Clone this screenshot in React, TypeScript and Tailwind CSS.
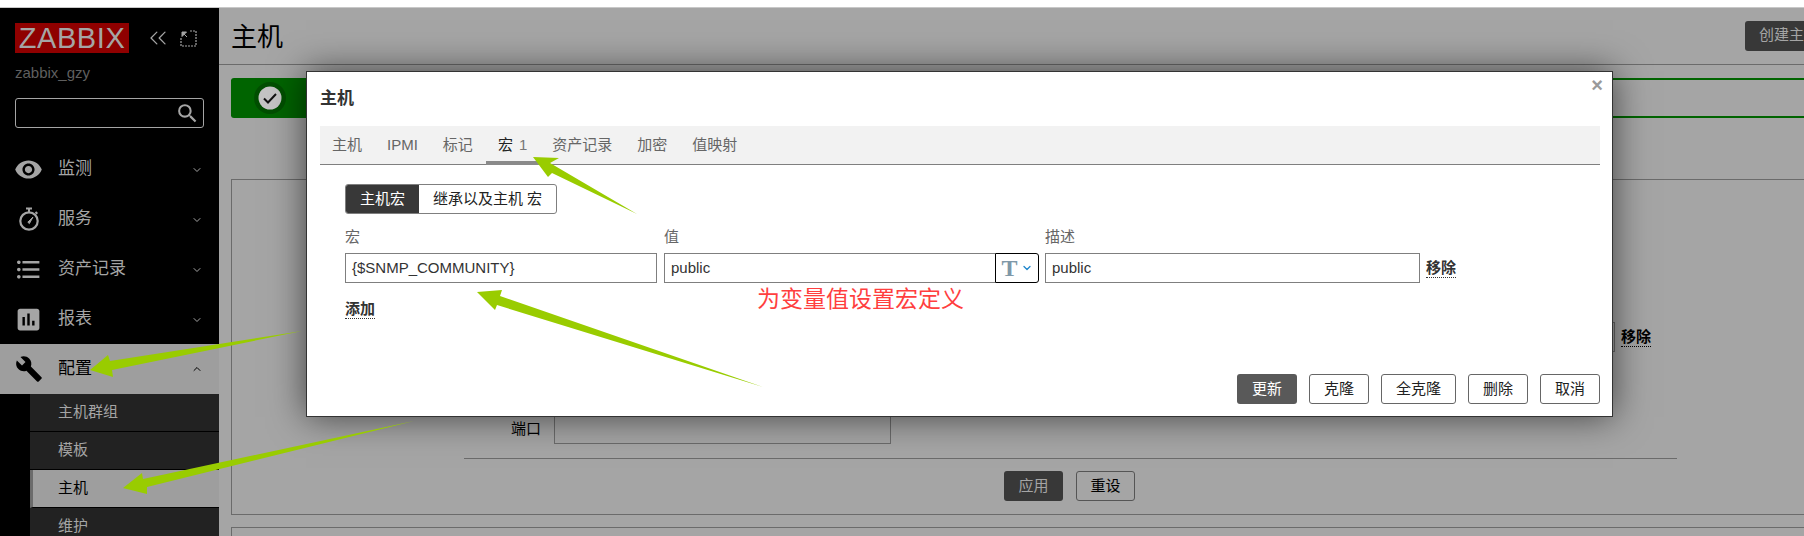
import React from "react";
import { ChevronDown, ChevronUp, ChevronsLeft } from "lucide-react";
import {
  MdAssessment,
  MdBuild,
  MdFormatListBulleted,
  MdSearch,
  MdVisibility,
} from "react-icons/md";

const Stopwatch = () => (
  <svg width="22" height="24" viewBox="0 0 22 24" fill="none" stroke="currentColor">
    <circle cx="11" cy="14" r="8.7" strokeWidth="2.2" />
    <path d="M8 1.5h6M11 1.5v3.5M17.5 5l1.8 1.8" strokeWidth="2" />
    <path d="M9.8 15.2L15 10l-3.6 6.6z" fill="currentColor" strokeWidth="1" />
  </svg>
);

const menuItems = [
  { label: "监测", icon: <MdVisibility size={29} /> },
  { label: "服务", icon: <Stopwatch /> },
  { label: "资产记录", icon: <MdFormatListBulleted size={29} /> },
  { label: "报表", icon: <MdAssessment size={29} /> },
];

const tabs = ["主机", "IPMI", "标记", "宏", "资产记录", "加密", "值映射"];

const arrows = [
  "90,370 108,355 110,361 302,331 112,370 113,377",
  "123,488 142,473 143,479 414,421 147,487 147,494",
  "533,157 559,158 550,163 637,214 552,173 548,177",
  "477,292 502,290 500,296 763,387 497,305 495,310",
];

const SideRow = ({ label, icon }: { label: string; icon: React.ReactNode }) => (
  <div className="flex h-[50px] items-center text-[17px] text-[#a5a5a5]">
    <span className="flex w-[58px] justify-center pr-[1px]">{icon}</span>
    <span>{label}</span>
    <ChevronDown size={12} strokeWidth={2} className="ml-auto mr-[16px] mt-[2px]" />
  </div>
);

const SubRow = ({ label, active }: { label: string; active?: boolean }) => (
  <div
    className={
      active
        ? "flex h-[38px] items-center border-b border-black border-l-[3px] border-l-[#6b6b6b] bg-[#9e9e9e] pl-[25px] text-[15px] text-black"
        : "flex h-[38px] items-center border-b border-black bg-[#222222] pl-[28px] text-[15px] text-[#a5a5a5]"
    }
  >
    {label}
  </div>
);

const Sidebar = () => (
  <aside className="h-full w-[219px] shrink-0 overflow-hidden bg-black">
    <div className="flex items-start pl-[15px] pt-[15px]">
      <div className="flex h-[30px] w-[114px] items-center justify-center bg-[#8f0000] text-[29px] leading-none tracking-[0.6px] text-[#a5a5a5]">
        ZABBIX
      </div>
      <ChevronsLeft size={28} strokeWidth={1.1} className="ml-[15px] mt-[1px] text-[#a5a5a5]" />
      <svg width="17" height="17" viewBox="0 0 17 17" className="ml-[8px] mt-[7px] text-[#a5a5a5]" fill="none" stroke="currentColor">
        <path d="M10 1h6v15H1V8" strokeWidth="1.2" strokeDasharray="2 1" />
        <path d="M2 2l5 5M2 2h4.5L2 6.5z" fill="currentColor" strokeWidth="1" />
      </svg>
    </div>
    <div className="mt-[10px] pl-[15px] text-[15px] leading-[20px] text-[#5f5f5f]">zabbix_gzy</div>
    <div className="ml-[15px] mt-[15px] flex h-[30px] w-[189px] items-center justify-end rounded-[3px] border border-[#a5a5a5] pr-[3px] text-[#a5a5a5]">
      <MdSearch size={25} />
    </div>
    <div className="mt-[16px]">
      {menuItems.map((item) => (
        <SideRow key={item.label} label={item.label} icon={item.icon} />
      ))}
      <div className="flex h-[50px] items-center bg-[#9e9e9e] text-[17px] text-black">
        <span className="flex w-[58px] justify-center pr-[1px]">
          <MdBuild size={28} />
        </span>
        <span>配置</span>
        <ChevronUp size={12} strokeWidth={2} className="ml-auto mr-[16px]" />
      </div>
      <div className="ml-[30px]">
        <SubRow label="主机群组" />
        <SubRow label="模板" />
        <SubRow label="主机" active />
        <SubRow label="维护" />
      </div>
    </div>
  </aside>
);

const BackgroundPage = () => (
  <main className="h-full min-w-0 flex-1 overflow-hidden bg-[#a5a5a5]">
    <header className="flex h-[57px] items-center justify-between border-b border-[#6b6b6b] pl-[12px]">
      <h1 className="mt-[2px] text-[26px] font-normal text-black">主机</h1>
      <div className="mb-[1px] flex h-[30px] w-[59px] items-center overflow-hidden whitespace-nowrap rounded-l-[3px] bg-[#383838] pl-[14px] text-[15px] text-[#a5a5a5]">
        创建主机
      </div>
    </header>
    <div className="ml-[12px] mt-[13px] h-[40px] rounded-l-[3px] border-y-2 border-[#006400]">
      <div className="flex h-full w-[90px] items-center bg-[#006400] pl-[23px]">
        <svg width="32" height="32" viewBox="0 0 32 32" className="-my-[2px]">
          <circle cx="16" cy="16" r="16" fill="#004f00" />
          <circle cx="16" cy="16" r="11.5" fill="#c4c4c4" />
          <path d="M10 16.5l4 4 8-8.5" fill="none" stroke="#111" strokeWidth="2" />
        </svg>
      </div>
    </div>
    <section className="ml-[12px] mt-[61px] h-[336px] border-y border-l border-[#6b6b6b]">
      <div className="mt-[142px] flex h-[30px] items-center">
        <div className="ml-[300px] h-[30px] w-[1083px] border border-[#6b6b6b]" />
        <span className="ml-[6px] border-b border-dotted border-black text-[15px] font-bold leading-[18px] text-black">
          移除
        </span>
      </div>
      <div className="mt-[62px] flex h-[30px] items-center">
        <span className="ml-[279px] text-[15px] text-black">端口</span>
        <div className="ml-[13px] h-[30px] w-[337px] border border-[#6b6b6b]" />
      </div>
      <div className="ml-[232px] mt-[14px] h-[1px] w-[1213px] bg-[#6b6b6b]" />
      <div className="ml-[772px] mt-[12px] flex gap-[13px]">
        <div className="flex h-[30px] w-[59px] items-center justify-center rounded-[3px] bg-[#383838] text-[15px] text-[#a5a5a5]">
          应用
        </div>
        <div className="flex h-[30px] w-[59px] items-center justify-center rounded-[3px] border border-[#555555] text-[15px] text-black">
          重设
        </div>
      </div>
    </section>
    <div className="ml-[12px] mt-[12px] h-[20px] border-l border-t border-[#6b6b6b]" />
  </main>
);

const Field = ({ value, className }: { value: string; className: string }) => (
  <div className={`flex h-[30px] items-center border border-[#7f7f7f] pl-[6px] text-[15px] text-[#333333] ${className}`}>
    {value}
  </div>
);

const FooterButton = ({ label, width, primary }: { label: string; width: string; primary?: boolean }) => (
  <div
    className={
      primary
        ? `flex h-[30px] items-center justify-center rounded-[3px] bg-[#595959] text-[15px] text-white ${width}`
        : `flex h-[30px] items-center justify-center rounded-[3px] border border-[#666666] text-[15px] text-[#222222] ${width}`
    }
  >
    {label}
  </div>
);

const HostDialog = () => (
  <div className="absolute left-[306px] top-[71px] flex h-[346px] w-[1307px] flex-col border border-[#333333] bg-white pl-[13px] pr-[12px] shadow-[0_0_34px_rgba(0,0,0,0.6)]">
    <span className="absolute right-[9px] top-[2px] text-[20px] font-bold leading-[22px] text-[#9a9a9a]">×</span>
    <h2 className="mt-[15px] text-[17px] font-bold leading-[24px] text-[#333333]">主机</h2>
    <div className="mt-[15px] flex h-[39px] gap-[1px] border-b border-[#7f7f7f] bg-[#f2f2f2]">
      {tabs.map((tab) => (
        <div
          key={tab}
          className={
            tab === "宏"
              ? "-mb-[1px] flex items-center gap-[6px] border-b-[4px] border-[#8a8a8a] px-3 pt-[3px] text-[15px] text-[#222222]"
              : "flex items-center px-3 text-[15px] text-[#666666]"
          }
        >
          {tab}
          {tab === "宏" && <span className="text-[#777777]">1</span>}
        </div>
      ))}
    </div>
    <div className="ml-[25px] mt-[19px] flex h-[30px] w-[212px] overflow-hidden rounded-[3px] border border-[#7f7f7f] text-[15px]">
      <div className="flex w-[73px] items-center justify-center bg-[#383838] text-white">主机宏</div>
      <div className="flex flex-1 items-center justify-center whitespace-pre text-[#222222]">继承以及主机 宏</div>
    </div>
    <div className="ml-[25px] mt-[9px] flex gap-[7px] pb-[2px] text-[15px] leading-[28px] text-[#666666]">
      <span className="w-[312px]">宏</span>
      <span className="w-[374px]">值</span>
      <span>描述</span>
    </div>
    <div className="ml-[25px] flex items-center">
      <Field value="{$SNMP_COMMUNITY}" className="w-[312px]" />
      <Field value="public" className="ml-[7px] w-[331px] border-r-0" />
      <div className="flex h-[30px] w-[44px] items-center justify-center gap-[3px] rounded-r-[3px] border border-black">
        <span className="[font-family:'Liberation_Serif',serif] text-[24px] font-bold leading-none text-[#7f98a8]">T</span>
        <ChevronDown size={12} strokeWidth={2.6} className="text-[#1f86cc]" />
      </div>
      <Field value="public" className="ml-[6px] w-[375px]" />
      <span className="ml-[6px] border-b border-dotted border-[#333333] text-[15px] font-bold leading-[18px] text-[#333333]">
        移除
      </span>
    </div>
    <span className="ml-[25px] mt-[17px] w-fit border-b border-dotted border-[#333333] text-[15px] font-bold leading-[18px] text-[#333333]">
      添加
    </span>
    <div className="mt-auto flex justify-end gap-[12px] pb-[12px]">
      <FooterButton label="更新" width="w-[60px]" primary />
      <FooterButton label="克隆" width="w-[60px]" />
      <FooterButton label="全克隆" width="w-[75px]" />
      <FooterButton label="删除" width="w-[60px]" />
      <FooterButton label="取消" width="w-[60px]" />
    </div>
  </div>
);

const App: React.FC = () => {
  return (
    <div className="relative h-[536px] w-[1804px] overflow-hidden bg-white [font-family:'Liberation_Sans','Noto_Sans_CJK_SC',sans-serif]">
      <div className="h-[8px] border-b border-[#c8c8c8] bg-white" />
      <div className="flex h-[528px]">
        <Sidebar />
        <BackgroundPage />
      </div>
      <HostDialog />
      <span className="absolute left-[757px] top-[284px] text-[23px] leading-[30px] text-[#ff3f3f]">为变量值设置宏定义</span>
      {/* annotation arrows on top of the screenshot */}
      <svg width="1804" height="536" className="pointer-events-none absolute left-0 top-0">
        {arrows.map((points) => (
          <polygon key={points} points={points} fill="#99cc00" />
        ))}
      </svg>
    </div>
  );
};

export default App;
